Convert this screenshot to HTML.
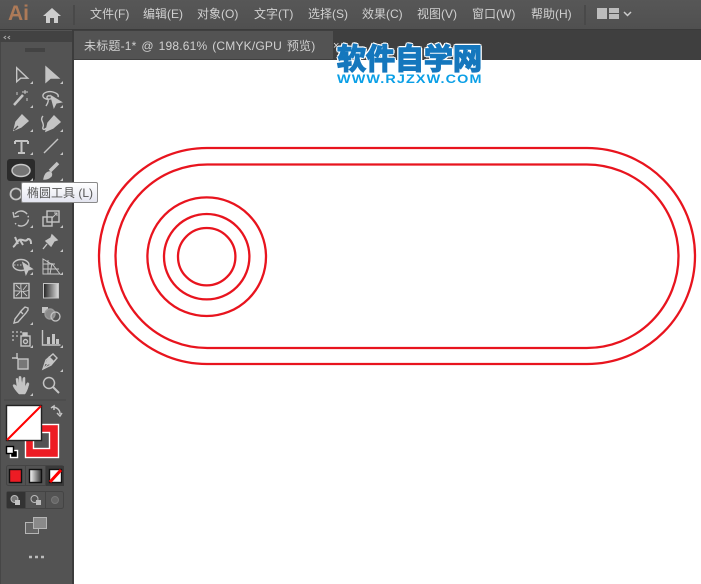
<!DOCTYPE html>
<html><head><meta charset="utf-8"><style>
html,body{margin:0;padding:0;background:#fff}
#p{position:relative;width:701px;height:584px;overflow:hidden;background:#fff;font-family:"Liberation Sans","Noto Sans CJK SC",sans-serif}
.a{position:absolute;white-space:nowrap}
.m{top:6px;font-size:12px;line-height:16px;color:#d0d0d0}
</style></head><body><div id="p">
<div class="a" style="left:0;top:0;width:701px;height:30px;background:linear-gradient(#575757,#505050);border-bottom:1px solid #3a3a3a;box-sizing:border-box"></div>
<div class="a" style="left:0;top:30px;width:701px;height:30px;background:#3f3f3f"></div>
<div class="a" style="left:8px;top:2px;font:bold 21px/24px 'Liberation Sans',sans-serif;color:#ad7a58">Ai</div>
<svg class="a" style="left:43px;top:7px" width="18" height="17" viewBox="0 0 18 17"><path d="M9 1L0 9h3v7h4v-5h4v5h4V9h3z" fill="#cdcdcd"/></svg>
<div class="a" style="left:73px;top:5px;width:2px;height:20px;background:#494949"></div>
<div class="a m" style="left:90px">文件(F)</div><div class="a m" style="left:143px">编辑(E)</div><div class="a m" style="left:197px">对象(O)</div><div class="a m" style="left:254px">文字(T)</div><div class="a m" style="left:308px">选择(S)</div><div class="a m" style="left:362px">效果(C)</div><div class="a m" style="left:417px">视图(V)</div><div class="a m" style="left:472px">窗口(W)</div><div class="a m" style="left:531px">帮助(H)</div>
<div class="a" style="left:584px;top:5px;width:2px;height:20px;background:#494949"></div>
<svg class="a" style="left:597px;top:8px" width="40" height="12"><path d="M0 0h10v11H0zM12 0h5v0h5v5H12zM12 6h10v5H12z" fill="#bdbdbd"/><path d="M27 4l3.500 3.500L34 4" stroke="#ccc" stroke-width="1.500" fill="none"/></svg>
<div class="a" style="left:74px;top:31px;width:259px;height:28px;background:#535353"></div>
<div class="a" style="left:84px;top:38px;font-size:12px;line-height:16px;color:#d0d0d0;letter-spacing:.2px;word-spacing:1.300px">未标题-1* @ 198.61% (CMYK/GPU 预览)</div>
<div class="a" style="left:333px;top:40px;font-size:11px;line-height:12px;color:#ddd">×</div>
<div class="a" style="left:0;top:30px;width:74px;height:554px;background:#535353"></div>
<div class="a" style="left:0;top:31px;width:72px;height:11px;background:#424242"></div>
<div class="a" style="left:0;top:42px;width:1px;height:542px;background:#464646"></div>
<div class="a" style="left:72px;top:30px;width:2px;height:554px;background:#3c3c3c"></div>
<svg class="a" style="left:0;top:0" width="74" height="584" fill="none" stroke="#c4c4c4" stroke-width="1.400">
<path d="M6 36l-2 1.500 2 1.500M10 36l-2 1.500 2 1.500" stroke="#aaa" stroke-width="1"/>
<path d="M26 48v4M28 48v4M30 48v4M32 48v4M34 48v4M36 48v4M38 48v4M40 48v4M42 48v4M44 48v4" stroke="#333" stroke-width="1"/>
<path d="M16.700 67.700v14l4-3.500h7z"/><path d="M46 67v15l4.500-4h8z" fill="#c4c4c4"/>
<path d="M14 105l9-10" stroke-width="2.500"/><path d="M25 90v4M22 92h6M17 92v3M27 98v3" stroke-width="1"/>
<path d="M53 98c-6 3-11 0-10-3 1-3 6-4 10-3 4 1 6 3 5 5M50 96c-3-1-4 2-2 3 1 3-1 5-2 7"/><path d="M51 96l10 6-5 1-2 4z" fill="#c4c4c4"/>
<path d="M14 130l2-8 6-7 6 6-7 6z" fill="#c4c4c4"/><path d="M14 130l4-4" stroke="#535353"/>
<path d="M46 131l2-8 6-7 6 6-7 6z" fill="#c4c4c4"/><path d="M43 116c-4 4 2 7 0 11-1 3 2 3 3 1"/>
<path d="M15 141h13M21.500 141v12M18 153h7M15 141v3M28 141v3" stroke-width="2"/><path d="M44 153l14-14"/>
<rect x="7" y="159" width="28" height="22" rx="3" fill="#2b2b2b" stroke="none"/><ellipse cx="21" cy="170.500" rx="9" ry="6" fill="#757575" stroke="#c8c8c8"/>
<path d="M58 163l-8 8" stroke-width="3.500"/><path d="M44 179c1-5 3-7 6-7 2 1 2 4 0 5-2 2-4 2-6 2z" fill="#c4c4c4"/>
<circle cx="16" cy="194" r="5.500" stroke-width="1.800"/>
<path d="M15 214a7.500 7.500 0 1 1 0 9" stroke-dasharray="14 2 1.500 2"/><path d="M13 212l1 5 5-1" />
<rect x="43" y="217" width="9" height="9"/><rect x="47" y="211" width="12" height="11"/><path d="M52 218l5-5M54 213h3v3" stroke-width="1"/>
<path d="M13 247c2-1 3-4 6-7 3-2 6 3 9-1 3 0 3 3 3 5M15 237l3 7M20 240l3 5" stroke-width="2"/>
<path d="M52 235l5 5-3 1-3 5-5-5 5-3zM47 244l-4 5" fill="#c4c4c4"/>
<ellipse cx="21" cy="265" rx="8" ry="5.500"/><path d="M14 265h13" stroke-dasharray="1.500 1.500" stroke-width="1"/><path d="M23 263l9 6-4 1-2 4z" fill="#c4c4c4"/>
<path d="M43 259v15h17l-7-9zM43 264h12M43 269h16M48 260v14M52 263l-2 11" stroke-width="1"/>
<rect x="14" y="283.500" width="15" height="14.500"/><path d="M14 291c5-1 10 2 15-1M21 284c-1 5 2 10 0 14M16 285l4 4M27 285l-4 5M16 296l4-4M27 296l-4-4" stroke-width="1"/>
<path d="M28 308l-3-1-3 3-7 9-1 4 4-1 8-9 2-3z M20 311l3 3"/>
<path d="M42 307h6v6h-6z" fill="#c4c4c4" stroke="none"/><circle cx="50" cy="314" r="5" fill="#8a8a8a" stroke="#999"/><circle cx="55.500" cy="316.500" r="4.500" stroke-width="1.300"/>
<path d="M12 332h2M16 332h2M20 332h2M12 336h2M16 336h2M12 340h2" stroke="#999" stroke-width="2"/>
<rect x="21" y="336" width="9" height="10"/><circle cx="25.500" cy="341.500" r="2"/><path d="M23 336v-3h4v3" fill="#c4c4c4"/>
<path d="M42.500 330v15h18"/><path d="M47 337h3v7h-3zM52 334h3v10h-3zM56 339h3v5h-3z" fill="#c4c4c4" stroke="none"/>
<path d="M12 358h6M17 353v6"/><rect x="18" y="359" width="10" height="10" fill="#777" stroke="#c4c4c4"/>
<path d="M43 369l3-9 7-6 4 4-6 7z"/><path d="M49 356l5 5-3 4-6-1z" fill="#c4c4c4" stroke="none"/><path d="M43 369l5-5" stroke-width="1"/>
<path d="M19 394c-3-3-6-7-6-9 1-1 3 0 4 2l-1-8c0-1 2-1 2 0l1 6 0-8c0-1 2-1 2 0l1 8 1-7c1-1 2-1 2 0l0 9 2-4c1-1 2 0 2 1-1 4-2 7-4 10z" fill="#c4c4c4" stroke-width=".5"/>
<circle cx="49" cy="383" r="5.500" stroke-width="1.500"/><path d="M53 387l6 6" stroke-width="2"/>
<g fill="#c4c4c4" stroke="none"><path d="M33 84v-3l-3 3zM63 84v-3l-3 3zM33 108v-3l-3 3zM63 108v-3l-3 3zM33 132v-3l-3 3zM63 132v-3l-3 3zM33 155v-3l-3 3zM63 155v-3l-3 3zM33 181v-3l-3 3zM63 181v-3l-3 3zM33 228v-3l-3 3zM63 228v-3l-3 3zM33 252v-3l-3 3zM63 252v-3l-3 3zM33 275v-3l-3 3zM63 275v-3l-3 3zM33 325v-3l-3 3zM33 348v-3l-3 3zM63 348v-3l-3 3zM63 372v-3l-3 3zM33 396v-3l-3 3z"/></g>
<path d="M4 400h62" stroke="#474747" stroke-width="1"/>
<rect x="25.500" y="424.500" width="33" height="33" fill="#ed1c24" stroke="#fff"/><rect x="33.500" y="432.500" width="16" height="16" fill="#535353" stroke="#fff"/>
<rect x="6.500" y="405.500" width="35" height="35" fill="#fff" stroke="#222"/><path d="M7 440l34-34" stroke="#f00" stroke-width="2"/>
<path d="M52 407c4 0 8 2 8 7M51 408l3-2v4M57 413l3 3 2-3" stroke-width="1.500"/>
<rect x="10.500" y="450.500" width="7" height="7" fill="#000" stroke="#fff"/><rect x="6.500" y="446.500" width="7" height="7" fill="#fff" stroke="#000"/>
<rect x="6.500" y="465.500" width="57" height="20" rx="2" stroke="#444" stroke-width="1"/><rect x="46" y="466" width="18" height="20" fill="#3a3a3a" stroke="none"/>
<path d="M25.500 466v20M45.500 466v20" stroke="#444" stroke-width="1"/>
<rect x="9.500" y="469.500" width="12" height="13" fill="#ed1c24" stroke="#111"/>
<defs><linearGradient id="g"><stop offset="0" stop-color="#fff"/><stop offset="1" stop-color="#333"/></linearGradient><linearGradient id="g2"><stop offset="0" stop-color="#222"/><stop offset="1" stop-color="#ddd"/></linearGradient></defs>
<rect x="29.500" y="469.500" width="12" height="13" fill="url(#g)" stroke="#111"/>
<rect x="49.500" y="469.500" width="12" height="13" fill="#fff" stroke="#111"/><path d="M50 482l11-12" stroke="#f00" stroke-width="3"/>
<rect x="43.500" y="283.500" width="15" height="14.500" fill="url(#g2)" stroke="#c4c4c4" stroke-width="1"/>
<rect x="6.500" y="491.500" width="57" height="17" rx="2" stroke="#444" stroke-width="1"/><rect x="7" y="492" width="18" height="16" fill="#333" stroke="none"/>
<path d="M25.500 492v16M45.500 492v16" stroke="#444" stroke-width="1"/>
<circle cx="14.500" cy="499" r="3.500" fill="#777" stroke="#bbb" stroke-width="1"/><rect x="15" y="500" width="5" height="5" fill="#c4c4c4" stroke="none"/>
<circle cx="34.500" cy="499" r="3.500" fill="#535353" stroke="#bbb" stroke-width="1"/><rect x="36" y="500" width="5" height="5" fill="#bbb" stroke="none"/>
<circle cx="55" cy="500" r="3.500" fill="#666" stroke="#777" stroke-width="1"/>
<rect x="25.500" y="522.500" width="13" height="11" fill="#666" stroke="#b5b5b5" stroke-width="1"/><rect x="33.500" y="517.500" width="13" height="11" fill="#8a8a8a" stroke="#b5b5b5" stroke-width="1"/>
<path d="M29 557h3M35 557h3M41 557h3" stroke="#bbb" stroke-width="2.500"/>
</svg>
<div class="a" style="left:21px;top:182px;width:77px;height:21px;box-sizing:border-box;border:1px solid #8a8a8a;border-radius:2px;background:linear-gradient(#fff,#e4e5f0);font-size:12px;line-height:20px;color:#555;padding-left:5px">椭圆工具 (L)</div>
<div class="a" style="left:337px;top:41px;font:bold 29px/32px 'Noto Sans CJK SC',sans-serif;color:#1577bd;-webkit-text-stroke:1.500px #1577bd;text-shadow:2px 0 0 #fff,-2px 0 0 #fff,0 2px 0 #fff,0 -2px 0 #fff,1.500px 1.500px 0 #fff,-1.500px 1.500px 0 #fff,1.500px -1.500px 0 #fff,-1.500px -1.500px 0 #fff">软件自学网</div>
<div class="a" style="left:337px;top:74px;font:bold 11.500px/12px 'Liberation Sans',sans-serif;letter-spacing:.9px;color:#0a9fe6;transform:scaleX(1.250);transform-origin:0 0">WWW.RJZXW.COM</div>
<svg class="a" style="left:74px;top:60px" width="627" height="524" viewBox="74 60 627 524" fill="none" stroke="#e8141e" stroke-width="2.300">
<rect x="99" y="148" width="596" height="216" rx="108"/>
<rect x="115.500" y="164.500" width="563" height="183.500" rx="91.750"/>
<circle cx="206.700" cy="256.700" r="59.300"/><circle cx="206.700" cy="256.700" r="42.700"/><circle cx="206.700" cy="256.700" r="28.700"/>
</svg>
</div></body></html>
